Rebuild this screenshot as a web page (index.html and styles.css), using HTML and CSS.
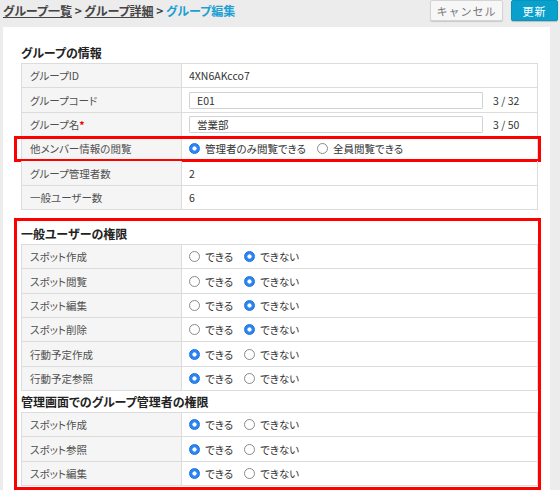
FILE: index.html
```html
<!DOCTYPE html>
<html lang="ja">
<head>
    <meta charset="utf-8">
    <link rel="stylesheet" href="styles.css">
</head>
<body>
    <div class="topbar">
        <div class="crumbs">
            <a class="crumb-link">グループ一覧</a> &gt; <a class="crumb-link">グループ詳細</a> &gt; <span class="crumb-current">グループ編集</span>
        </div>
        <div class="actions">
            <button class="btn btn-cancel">キャンセル</button>
            <button class="btn btn-save">更新</button>
        </div>
    </div>

    <div class="panel">
        <div class="section-title">グループの情報</div>
        <div class="rows">
            <div class="row">
                <div class="label">グループID</div>
                <div class="value">4XN6AKcco7</div>
            </div>
            <div class="row">
                <div class="label">グループコード</div>
                <div class="value">
                    <input class="text-input" type="text" value="E01">
                    <span class="counter">3 / 32</span>
                </div>
            </div>
            <div class="row">
                <div class="label">グループ名<span class="required">*</span></div>
                <div class="value">
                    <input class="text-input" type="text" value="営業部">
                    <span class="counter">3 / 50</span>
                </div>
            </div>
            <div class="row marked">
                <div class="label">他メンバー情報の閲覧</div>
                <div class="value">
                    <span class="choice"><span class="radio on"></span>管理者のみ閲覧できる</span>
                    <span class="choice"><span class="radio"></span>全員閲覧できる</span>
                </div>
            </div>
            <div class="row">
                <div class="label">グループ管理者数</div>
                <div class="value">2</div>
            </div>
            <div class="row">
                <div class="label">一般ユーザー数</div>
                <div class="value">6</div>
            </div>
        </div>

        <div class="marked-box">
            <div class="section-title sub">一般ユーザーの権限</div>
            <div class="rows">
                <div class="row">
                    <div class="label">スポット作成</div>
                    <div class="value">
                        <span class="choice"><span class="radio"></span>できる</span>
                        <span class="choice"><span class="radio on"></span>できない</span>
                    </div>
                </div>
                <div class="row">
                    <div class="label">スポット閲覧</div>
                    <div class="value">
                        <span class="choice"><span class="radio"></span>できる</span>
                        <span class="choice"><span class="radio on"></span>できない</span>
                    </div>
                </div>
                <div class="row">
                    <div class="label">スポット編集</div>
                    <div class="value">
                        <span class="choice"><span class="radio"></span>できる</span>
                        <span class="choice"><span class="radio on"></span>できない</span>
                    </div>
                </div>
                <div class="row">
                    <div class="label">スポット削除</div>
                    <div class="value">
                        <span class="choice"><span class="radio"></span>できる</span>
                        <span class="choice"><span class="radio on"></span>できない</span>
                    </div>
                </div>
                <div class="row">
                    <div class="label">行動予定作成</div>
                    <div class="value">
                        <span class="choice"><span class="radio on"></span>できる</span>
                        <span class="choice"><span class="radio"></span>できない</span>
                    </div>
                </div>
                <div class="row">
                    <div class="label">行動予定参照</div>
                    <div class="value">
                        <span class="choice"><span class="radio on"></span>できる</span>
                        <span class="choice"><span class="radio"></span>できない</span>
                    </div>
                </div>
            </div>

            <div class="section-title sub2">管理画面でのグループ管理者の権限</div>
            <div class="rows">
                <div class="row">
                    <div class="label">スポット作成</div>
                    <div class="value">
                        <span class="choice"><span class="radio on"></span>できる</span>
                        <span class="choice"><span class="radio"></span>できない</span>
                    </div>
                </div>
                <div class="row">
                    <div class="label">スポット参照</div>
                    <div class="value">
                        <span class="choice"><span class="radio on"></span>できる</span>
                        <span class="choice"><span class="radio"></span>できない</span>
                    </div>
                </div>
                <div class="row">
                    <div class="label">スポット編集</div>
                    <div class="value">
                        <span class="choice"><span class="radio on"></span>できる</span>
                        <span class="choice"><span class="radio"></span>できない</span>
                    </div>
                </div>
            </div>
        </div>
    </div>
</body>
</html>
```

FILE: styles.css
```css
body {
    margin: 0;
    background: #ececec;
    color: #333;
    font-family: 'Noto Sans CJK JP', 'Noto Sans', sans-serif;
    font-feature-settings: "palt";
    font-size: 10.5px;
    overflow: hidden;
}

.topbar {
    height: 27px;
    display: flex;
    justify-content: space-between;
    align-items: flex-start;
}

.crumbs {
    padding: 2px 0 0 3px;
    font-size: 12px;
    font-weight: bold;
    line-height: 17px;
    color: #444;
}

.crumb-link {
    color: #444;
    text-decoration: underline;
}

.crumb-current {
    color: #1d9fd3;
}

.actions {
    display: flex;
    gap: 8px;
    margin-right: 2px;
}

.btn {
    height: 21px;
    padding: 0;
    border-radius: 2px;
    font-family: inherit;
    font-size: 11px;
    white-space: nowrap;
    cursor: pointer;
}

.btn-cancel {
    width: 73px;
    background: #f7f7f7;
    border: 1px solid #d4d4d4;
    color: #777;
    letter-spacing: 1px;
    box-shadow: 0 1px 1px rgba(0, 0, 0, 0.15);
}

.btn-save {
    width: 47px;
    background: #0aa0cc;
    border: 1px solid #0994bd;
    color: #fff;
    letter-spacing: 1px;
    box-shadow: 0 1px 1px rgba(0, 0, 0, 0.2);
}

.panel {
    margin: 0 10px 0 3px;
    padding: 16px 12px 0 18px;
    background: #fff;
    min-height: 470px;
}

.section-title {
    font-size: 12px;
    font-weight: bold;
    line-height: 20px;
    color: #222;
}

.section-title.sub {
    padding-top: 3px;
}

.section-title.sub2 {
    line-height: 21px;
}

.rows {
    border-top: 1px solid #dcdcdc;
}

.row {
    position: relative;
    display: grid;
    grid-template-columns: 160px 1fr;
    height: 24.35px;
    box-sizing: border-box;
    border: 1px solid #dcdcdc;
    border-top: none;
}

.label {
    display: flex;
    align-items: center;
    padding-left: 8px;
    background: #f5f5f5;
    border-right: 1px solid #dcdcdc;
    color: #505050;
}

.required {
    color: #e00;
    font-weight: bold;
}

.value {
    display: flex;
    align-items: center;
    padding-left: 7px;
    color: #333;
}

.text-input {
    flex: 1;
    height: 17px;
    box-sizing: border-box;
    margin: 0 10px 0 0;
    padding: 0 7px;
    border: 1px solid #d2d2d2;
    border-radius: 1px;
    font-family: inherit;
    font-size: 10.5px;
    color: #333;
}

.counter {
    width: 44px;
}

.choice {
    display: inline-flex;
    align-items: center;
    gap: 5px;
    margin-right: 11px;
}

.radio {
    width: 11px;
    height: 11px;
    box-sizing: border-box;
    border: 1px solid #8a8a8a;
    border-radius: 50%;
    background: #fff;
}

.radio.on {
    border-color: #1a6fe0;
    background: radial-gradient(circle, #fff 0 1.8px, #2b86f4 2.4px);
}

/* annotation frames */
.marked::after {
    content: '';
    position: absolute;
    top: -1px;
    bottom: -2px;
    left: -8px;
    right: -4px;
    border: 3px solid #f00;
    pointer-events: none;
}

.marked-box {
    position: relative;
    margin: 8px -3px 0 -7px;
    padding: 0 0 1px 4px;
    border: 3px solid #f00;
}
```
